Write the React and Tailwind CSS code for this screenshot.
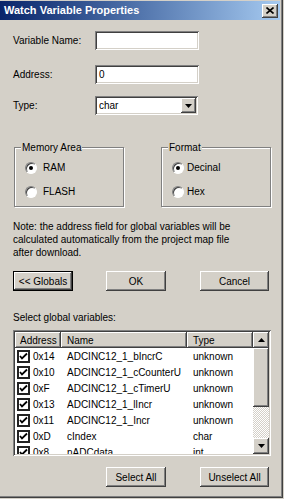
const raised = "shadow-[inset_-1px_-1px_0_#404040,inset_1px_1px_0_#ffffff,inset_-2px_-2px_0_#808080,inset_2px_2px_0_#d4d0c8]";
const raisedThin = "shadow-[inset_-1px_-1px_0_#404040,inset_1px_1px_0_#ffffff,inset_-2px_-2px_0_#808080]";
const sunken = "shadow-[inset_1px_1px_0_#808080,inset_-1px_-1px_0_#ffffff,inset_2px_2px_0_#404040,inset_-2px_-2px_0_#d4d0c8]";
const etched = "border border-[#808080] shadow-[1px_1px_0_#ffffff,inset_1px_1px_0_#ffffff]";

function Button({ children, w, def }) {
  return (
    <div
      className={
        "h-[20px] flex items-center justify-center " +
        (def ? "border border-black " : "") +
        raised
      }
      style={{ width: w }}
    >
      {children}
    </div>
  );
}

function Radio({ checked }) {
  return (
    <div className="w-[12px] h-[12px] rounded-full bg-white border border-t-[#808080] border-l-[#808080] border-r-white border-b-white shadow-[inset_1px_1px_0_#404040] flex items-center justify-center shrink-0">
      {checked && <div className="w-[4px] h-[4px] rounded-full bg-black" />}
    </div>
  );
}

function Check() {
  return (
    <div className="w-[13px] h-[13px] bg-white border-2 border-[#222] flex items-center justify-center shrink-0">
      <svg width="9" height="9" viewBox="0 0 9 9">
        <polyline points="1,4 3,6.5 8,1.5" fill="none" stroke="#000" strokeWidth="1.8" />
      </svg>
    </div>
  );
}

function Arrow({ dir }) {
  return (
    <svg width="7" height="4" viewBox="0 0 7 4">
      {dir === "down" ? <polygon points="0,0 7,0 3.5,4" fill="#000" /> : <polygon points="0,4 7,4 3.5,0" fill="#000" />}
    </svg>
  );
}

const rows = [
  ["0x14", "ADCINC12_1_bIncrC", "unknown"],
  ["0x10", "ADCINC12_1_cCounterU", "unknown"],
  ["0xF", "ADCINC12_1_cTimerU", "unknown"],
  ["0x13", "ADCINC12_1_lIncr", "unknown"],
  ["0x11", "ADCINC12_1_Incr", "unknown"],
  ["0xD", "cIndex", "char"],
  ["0x8", "nADCdata", "int"],
];

export default function App() {
  return (
    <div className="w-[284px] h-[499px] bg-[#d4d0c8] font-['Liberation_Sans',Arial,sans-serif] text-[10px] leading-[13px] text-black overflow-hidden">
      <div className="w-[283px] h-[498px] flex flex-col shadow-[inset_-1px_-1px_0_#404040,inset_-2px_-2px_0_#808080]">
        {/* Title bar */}
        <div className="mt-[1px] w-[280px] h-[19px] flex items-center justify-between bg-linear-to-r from-[#0a246a] to-[#a6caf0] pl-[4px] pr-[2px]">
          <span className="text-white font-bold text-[11px] leading-[13px]">Watch Variable Properties</span>
          <div className={"w-[16px] h-[14px] bg-[#d4d0c8] flex items-center justify-center " + raisedThin}>
            <svg width="8" height="7" viewBox="0 0 8 7">
              <path d="M0.5 0.5 L7.5 6.5 M7.5 0.5 L0.5 6.5" stroke="#000" strokeWidth="1.6" />
            </svg>
          </div>
        </div>

        <div className="flex flex-col pl-[13px]">
          {/* Variable Name */}
          <div className="mt-[11px] h-[19px] flex items-center">
            <span className="w-[82px]">Variable Name:</span>
            <div className={"w-[104px] h-[19px] bg-white " + sunken} />
          </div>
          {/* Address */}
          <div className="mt-[15px] h-[19px] flex items-center">
            <span className="w-[82px]">Address:</span>
            <div className={"w-[104px] h-[19px] bg-white flex items-center pl-[4px] " + sunken}>0</div>
          </div>
          {/* Type */}
          <div className="mt-[12px] h-[19px] flex items-center">
            <span className="w-[82px]">Type:</span>
            <div className={"w-[103px] h-[19px] bg-white flex items-center justify-between pl-[4px] pr-[2px] " + sunken}>
              <span>char</span>
              <div className={"w-[15px] h-[15px] bg-[#d4d0c8] flex items-center justify-center " + raised}>
                <Arrow dir="down" />
              </div>
            </div>
          </div>

          {/* Group boxes */}
          <div className="mt-[32px] flex gap-[37px] pl-[1px]">
            <div className={"relative w-[110px] h-[60px] flex flex-col pl-[10px] " + etched}>
              <span className="absolute -top-[7px] left-[6px] bg-[#d4d0c8] px-[1px]">Memory Area</span>
              <div className="mt-[13px] flex items-center gap-[6px]">
                <Radio checked />
                <span>RAM</span>
              </div>
              <div className="mt-[11px] flex items-center gap-[6px]">
                <Radio />
                <span>FLASH</span>
              </div>
            </div>
            <div className={"relative w-[110px] h-[60px] flex flex-col pl-[10px] " + etched}>
              <span className="absolute -top-[7px] left-[6px] bg-[#d4d0c8] px-[1px]">Format</span>
              <div className="mt-[13px] flex items-center gap-[3px]">
                <Radio checked />
                <span>Decinal</span>
              </div>
              <div className="mt-[11px] flex items-center gap-[3px]">
                <Radio />
                <span>Hex</span>
              </div>
            </div>
          </div>

          {/* Note */}
          <p className="mt-[13px] w-[230px]">
            Note: the address field for global variables will be calculated automatically from the project map file after download.
          </p>

          {/* Buttons */}
          <div className="mt-[12px] flex">
            <Button w={60} def>&lt;&lt; Globals</Button>
            <div className="ml-[33px]"><Button w={60}>OK</Button></div>
            <div className="ml-[34px]"><Button w={69}>Cancel</Button></div>
          </div>

          <div className="mt-[20px]">Select global variables:</div>

          {/* List view */}
          <div className={"mt-[6px] w-[258px] h-[126px] bg-white p-[2px] flex " + sunken}>
            <div className="flex-1 flex flex-col overflow-hidden">
              <div className="h-[16px] flex shrink-0 bg-[#d4d0c8]">
                <div className={"w-[46px] h-[16px] flex items-center pl-[5px] " + raisedThin}>Address</div>
                <div className={"w-[126px] h-[16px] flex items-center pl-[6px] " + raisedThin}>Name</div>
                <div className={"flex-1 h-[16px] flex items-center pl-[6px] " + raisedThin}>Type</div>
              </div>
              {rows.map((r) => (
                <div key={r[0]} className="h-[16px] flex items-center shrink-0">
                  <div className="w-[46px] flex items-center gap-[3px] pl-[2px]">
                    <Check />
                    <span>{r[0]}</span>
                  </div>
                  <div className="w-[126px] pl-[6px] whitespace-nowrap">{r[1]}</div>
                  <div className="pl-[6px]">{r[2]}</div>
                </div>
              ))}
            </div>
            {/* Scrollbar */}
            <div className="w-[16px] flex flex-col">
              <div className={"h-[16px] bg-[#d4d0c8] flex items-center justify-center " + raised}>
                <Arrow dir="up" />
              </div>
              <div className={"h-[59px] bg-[#d4d0c8] " + raised} />
              <div className="flex-1 bg-[repeating-conic-gradient(#d4d0c8_0_25%,#ffffff_0_50%)] bg-[length:2px_2px]" />
              <div className={"h-[16px] bg-[#d4d0c8] flex items-center justify-center " + raised}>
                <Arrow dir="down" />
              </div>
            </div>
          </div>

          {/* Bottom buttons */}
          <div className="mt-[11px] flex pl-[93px]">
            <Button w={60}>Select All</Button>
            <div className="ml-[34px]"><Button w={69}>Unselect All</Button></div>
          </div>
        </div>
      </div>
    </div>
  );
}
